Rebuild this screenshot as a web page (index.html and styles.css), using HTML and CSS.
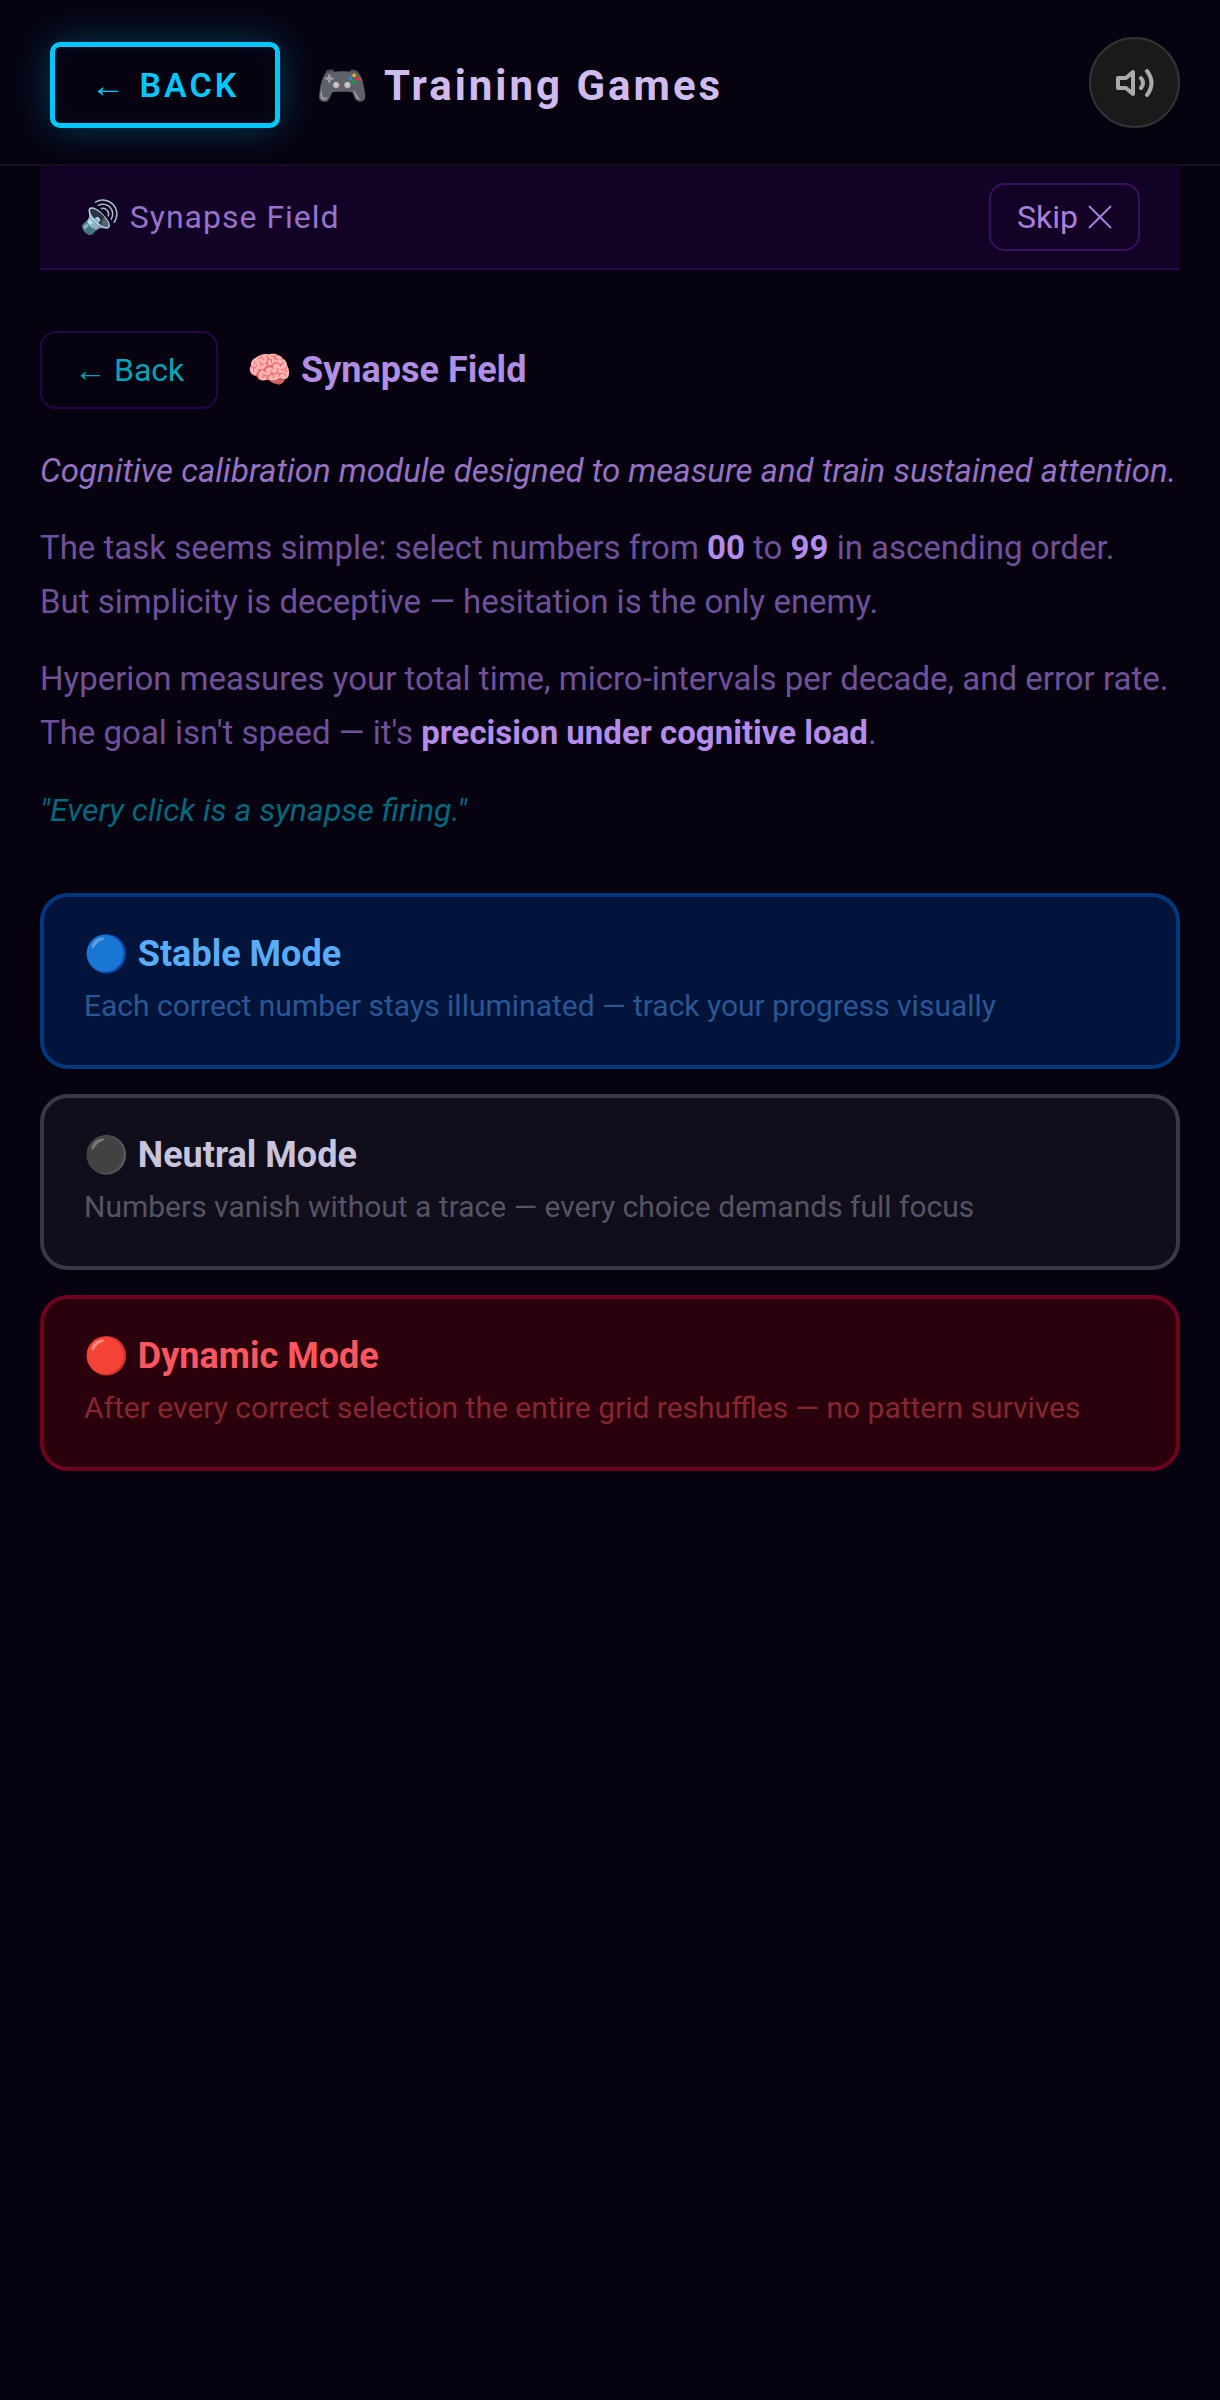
FILE: index.html
```html
<!DOCTYPE html>
<html lang="en">
<head>
    <meta charset="UTF-8">
    <meta name="viewport" content="width=device-width, initial-scale=1.0">
    <title>Training Games</title>
    <link rel="stylesheet" href="styles.css">
</head>
<body>
    <header class="top-bar">
        <div class="top-title">
            <button class="back-button" type="button">← BACK</button>
            <h1>🎮 Training Games</h1>
        </div>
        <button class="sound-button" type="button" aria-label="Sound">
            <svg viewBox="0 0 40 40" fill="none" stroke="#aaa" stroke-width="4">
                <path d="M3 15h8l7-6v22l-7-6H3z" stroke-linejoin="round"/>
                <path d="M26 15q4 5 0 10M32 8q9 12 0 24" stroke-linecap="round"/>
            </svg>
        </button>
    </header>

    <main>
        <div class="audio-bar">
            <span>🔊 Synapse Field</span>
            <button class="skip-button" type="button">Skip
                <svg viewBox="0 0 24 24" stroke="currentColor" stroke-width="2"><path d="M1 1l22 22M23 1L1 23"/></svg>
            </button>
        </div>

        <div class="game-header">
            <button class="game-back" type="button">← Back</button>
            <h2>🧠 Synapse Field</h2>
        </div>

        <section class="description">
            <p class="intro">Cognitive calibration module designed to measure and train sustained attention.</p>
            <p>The task seems simple: select numbers from <strong>00</strong> to <strong>99</strong> in ascending order.<br>But simplicity is deceptive — hesitation is the only enemy.</p>
            <p>Hyperion measures your total time, micro-intervals per decade, and error rate.<br>The goal isn't speed — it's <strong>precision under cognitive load</strong>.</p>
            <p class="quote">"Every click is a synapse firing."</p>
        </section>

        <div class="modes">
            <button class="mode stable" type="button">
                <span class="mode-title">🔵 Stable Mode</span>
                <span class="mode-text">Each correct number stays illuminated — track your progress visually</span>
            </button>
            <button class="mode neutral" type="button">
                <span class="mode-title">⚫ Neutral Mode</span>
                <span class="mode-text">Numbers vanish without a trace — every choice demands full focus</span>
            </button>
            <button class="mode dynamic" type="button">
                <span class="mode-title">🔴 Dynamic Mode</span>
                <span class="mode-text">After every correct selection the entire grid reshuffles — no pattern survives</span>
            </button>
        </div>
    </main>
</body>
</html>
```
FILE: styles.css
```css
* {
    box-sizing: border-box;
}

body {
    margin: 0;
    min-height: 100vh;
    background-color: #060210;
    color: #6e5199;
    font-family: Roboto, "Noto Color Emoji", sans-serif;
    font-size: 33px;
}

h1, h2, p {
    margin: 0;
}

button {
    font-family: inherit;
    cursor: pointer;
}

.top-bar {
    display: flex;
    align-items: flex-end;
    justify-content: space-between;
    padding: 37px 40px 36px 50px;
    border-bottom: 2px solid #15101e;
}

.top-title {
    display: flex;
    align-items: center;
    gap: 36px;
}

.back-button {
    height: 86px;
    padding: 0 36px;
    border: 5px solid #00c8ff;
    border-radius: 10px;
    background: none;
    color: #00c8ff;
    font-size: 34px;
    font-weight: 600;
    letter-spacing: 3px;
    box-shadow: 0 0 40px rgba(0, 200, 255, 0.3), inset 0 0 26px rgba(0, 200, 255, 0.06);
}

h1 {
    color: #d0bcec;
    font-size: 42px;
    font-weight: 700;
    letter-spacing: 3px;
}

.sound-button {
    display: flex;
    align-items: center;
    justify-content: center;
    width: 91px;
    height: 91px;
    padding: 0;
    border: 2px solid #333;
    border-radius: 50%;
    background-color: #1a1a1a;
}

.sound-button svg {
    width: 40px;
    height: 40px;
}

main {
    padding: 0 40px;
}

.audio-bar {
    display: flex;
    align-items: center;
    justify-content: space-between;
    padding: 17px 40px;
    border-bottom: 2px solid #260a48;
    background-color: #120226;
    color: #9872c8;
    font-size: 32px;
    letter-spacing: 1px;
}

.skip-button {
    display: flex;
    align-items: center;
    gap: 10px;
    height: 68px;
    padding: 0 26px;
    border: 2px solid #38105f;
    border-radius: 16px;
    background: none;
    color: #a880dc;
    font-size: 32px;
}

.skip-button svg {
    width: 24px;
    height: 24px;
}

.game-header {
    display: flex;
    align-items: center;
    gap: 29px;
    margin: 61px 0 35px;
}

.game-back {
    height: 78px;
    padding: 0 32px;
    border: 2px solid #26054c;
    border-radius: 16px;
    background: none;
    color: #00a4b8;
    font-size: 32px;
}

h2 {
    color: #b08ee4;
    font-size: 36px;
    font-weight: 700;
}

.description {
    display: flex;
    flex-direction: column;
    gap: 23px;
    line-height: 54px;
}

.description strong {
    color: #b48cec;
}

.description .intro {
    color: #9672c4;
    font-style: italic;
}

.description .quote {
    color: #00697e;
    font-size: 32px;
    font-style: italic;
}

.modes {
    display: flex;
    flex-direction: column;
    gap: 25px;
    margin-top: 56px;
}

.mode {
    display: flex;
    flex-direction: column;
    padding: 32px 40px;
    border: 4px solid;
    border-radius: 28px;
    text-align: left;
}

.mode-title {
    font-size: 36px;
    font-weight: 700;
    line-height: 50px;
}

.mode-text {
    font-size: 30px;
    line-height: 54px;
}

.stable {
    border-color: #003880;
    background-color: #02143a;
    color: #58acfa;
}

.stable .mode-text {
    color: #2a5696;
}

.neutral {
    border-color: #3a3848;
    background-color: #100e1a;
    color: #c8c4dc;
}

.neutral .mode-text {
    color: #565364;
}

.dynamic {
    border-color: #700020;
    background-color: #2a000c;
    color: #fc5660;
}

.dynamic .mode-text {
    color: #862630;
}
```
